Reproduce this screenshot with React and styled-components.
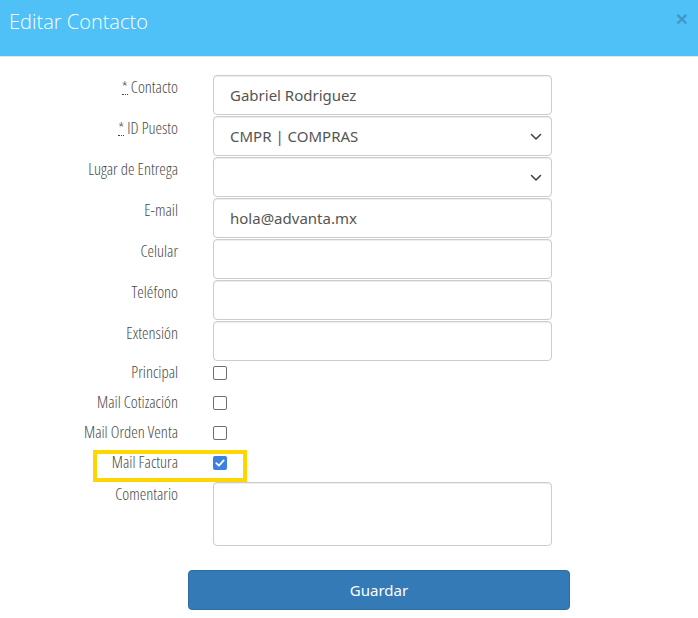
import React from "react";
import styled, { createGlobalStyle } from "styled-components";

const GlobalStyle = createGlobalStyle`
  * { box-sizing: border-box; }
  body {
    margin: 0;
    background: #fff;
    font-family: "Open Sans", "Noto Sans", sans-serif;
  }
`;

const fields = [
  { label: "Contacto", required: true, value: "Gabriel Rodriguez" },
  { label: "ID Puesto", required: true, value: "CMPR | COMPRAS", select: true },
  { label: "Lugar de Entrega", value: "", select: true },
  { label: "E-mail", value: "hola@advanta.mx" },
  { label: "Celular", value: "" },
  { label: "Teléfono", value: "" },
  { label: "Extensión", value: "" },
];

const checks = [
  { label: "Principal", checked: false },
  { label: "Mail Cotización", checked: false },
  { label: "Mail Orden Venta", checked: false },
  { label: "Mail Factura", checked: true, highlight: true },
];

const Chevron = () => (
  <svg width="12" height="8" viewBox="0 0 12 8" fill="none">
    <path d="M1.5 1.5 L6 6 L10.5 1.5" stroke="#444" strokeWidth="1.6" strokeLinecap="round" strokeLinejoin="round" />
  </svg>
);

const App = () => {
  return (
    <>
      <GlobalStyle />
      <Modal>
        <Header>
          <Title>Editar Contacto</Title>
          <Close>×</Close>
        </Header>
        <Body>
          {fields.map((f) => (
            <Row key={f.label}>
              <Label>
                {f.required && <Req>*</Req>}
                {f.required && " "}
                {f.label}
              </Label>
              <Control>
                {f.value}
                {f.select && (
                  <Arrow>
                    <Chevron />
                  </Arrow>
                )}
              </Control>
            </Row>
          ))}
          <Checks>
            {checks.map((c) => (
              <CheckRow key={c.label}>
                <CheckLabel>{c.label}</CheckLabel>
                <Box $checked={c.checked}>
                  {c.checked && (
                    <svg width="10" height="8" viewBox="0 0 10 8" fill="none">
                      <path d="M1.3 4.2 L3.9 6.6 L8.7 1.4" stroke="#fff" strokeWidth="1.8" strokeLinecap="round" strokeLinejoin="round" />
                    </svg>
                  )}
                </Box>
                {c.highlight && <Highlight />}
              </CheckRow>
            ))}
          </Checks>
          <Row>
            <Label>Comentario</Label>
            <TextArea />
          </Row>
          <Footer>
            <SaveButton>Guardar</SaveButton>
          </Footer>
        </Body>
      </Modal>
    </>
  );
};

export default App;

const Modal = styled.div`
  width: 698px;
  height: 618px;
  background: #fff;
`;

const Header = styled.div`
  display: flex;
  justify-content: space-between;
  align-items: flex-start;
  height: 57px;
  padding: 8px 10px 0 9px;
  background: #4fc1f7;
  border-bottom: 1px solid #e5e5e5;
`;

const Title = styled.h4`
  margin: 0;
  font-family: "Open Sans", sans-serif;
  font-weight: 300;
  font-size: 20px;
  line-height: 28px;
  color: #fff;
`;

const Close = styled.span`
  font-family: "Liberation Sans", sans-serif;
  font-weight: 700;
  font-size: 21px;
  line-height: 21px;
  color: #000;
  opacity: 0.2;
`;

const Body = styled.div`
  padding-top: 18px;
`;

const Row = styled.div`
  display: grid;
  grid-template-columns: 178px 339px;
  column-gap: 35px;
  margin-bottom: 1px;
`;

const Label = styled.label`
  padding-top: 2px;
  text-align: right;
  font-family: "Open Sans", sans-serif;
  font-stretch: 75%;
  font-weight: 350;
  font-size: 16.5px;
  line-height: 20px;
  color: #4a4a4a;
`;

const Req = styled.abbr`
  text-decoration: none;
  border-bottom: 1px dotted #444;
  line-height: 14px;
  display: inline-block;
`;

const Control = styled.div`
  position: relative;
  height: 40px;
  display: flex;
  align-items: center;
  padding: 0 16px;
  border: 1px solid #ccc;
  border-radius: 4px;
  box-shadow: inset 0 1px 1px rgba(0, 0, 0, 0.075);
  font-family: "Noto Sans", sans-serif;
  font-size: 15px;
  color: #555;
`;

const Arrow = styled.span`
  position: absolute;
  right: 9px;
  top: 16px;
  display: flex;
`;

const Checks = styled.div`
  display: flex;
  flex-direction: column;
`;

const CheckRow = styled.div`
  position: relative;
  display: grid;
  grid-template-columns: 178px 14px;
  column-gap: 35px;
  height: 30px;
  align-items: start;
`;

const CheckLabel = styled(Label)`
  padding-top: 0;
`;

const Box = styled.span`
  margin-top: 4px;
  width: 14px;
  height: 14px;
  border-radius: 2px;
  display: flex;
  align-items: center;
  justify-content: center;
  border: ${({ $checked }) => ($checked ? "none" : "1.5px solid #6f6e75")};
  background: ${({ $checked }) => ($checked ? "#3d7fe3" : "#fff")};
`;

const Highlight = styled.span`
  position: absolute;
  left: 93px;
  top: -2px;
  width: 154px;
  height: 32px;
  border: 4px solid #ffd700;
  pointer-events: none;
`;

const TextArea = styled.div`
  height: 64px;
  border: 1px solid #ccc;
  border-radius: 4px;
  box-shadow: inset 0 1px 1px rgba(0, 0, 0, 0.075);
`;

const Footer = styled.div`
  padding: 23px 0 0 188px;
`;

const SaveButton = styled.button`
  width: 382px;
  height: 40px;
  border: 1px solid #2e6da4;
  border-radius: 4px;
  background: #337ab7;
  color: #fff;
  font-family: "Noto Sans", sans-serif;
  font-size: 15px;
`;
